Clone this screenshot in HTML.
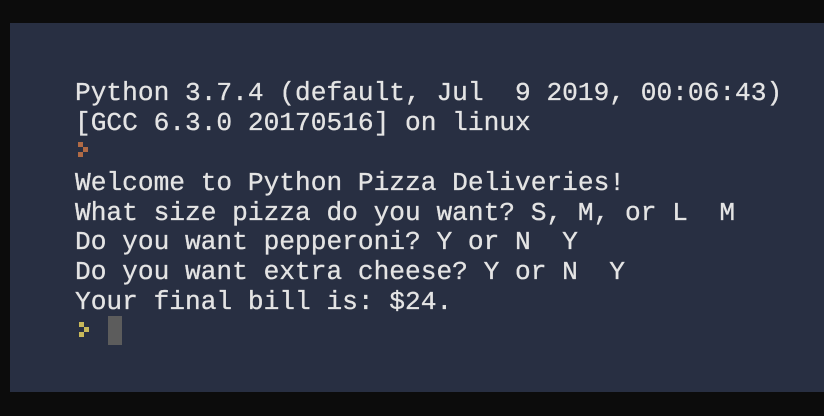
<!DOCTYPE html>
<html><head><style>
html,body{margin:0;padding:0;width:824px;height:416px;background:#0c0c0c;overflow:hidden}
#p{position:absolute;left:10px;top:23px;width:814px;height:369px;background:#282f42}
.l{position:absolute;left:75px;font-family:"Liberation Mono","Courier New",monospace;font-size:26.2px;color:#e4e4e4;white-space:pre;line-height:30px;-webkit-text-stroke:0.3px #e4e4e4}
.pr{position:absolute;width:12px;height:16px}
.pr i{position:absolute;width:5px;height:5px}
</style></head><body>
<div id="p"></div>
<div class="l" style="top:78px">Python 3.7.4 (default, Jul  9 2019, 00:06:43)</div>
<div class="l" style="top:108px">[GCC 6.3.0 20170516] on linux</div>
<div class="pr" style="left:78px;top:142px"><i style="left:0;top:0;background:#b06a45"></i><i style="left:5px;top:5px;background:#b06a45"></i><i style="left:0;top:10px;background:#b06a45"></i></div>
<div class="l" style="top:168px">Welcome to Python Pizza Deliveries!</div>
<div class="l" style="top:198px">What size pizza do you want? S, M, or L  M</div>
<div class="l" style="top:227px">Do you want pepperoni? Y or N  Y</div>
<div class="l" style="top:257px">Do you want extra cheese? Y or N  Y</div>
<div class="l" style="top:287px">Your final bill is: $24.</div>
<div class="pr" style="left:79px;top:322px"><i style="left:0;top:0;background:#c8b85a"></i><i style="left:5px;top:5px;background:#c8b85a"></i><i style="left:0;top:10px;background:#c8b85a"></i></div>
<div style="position:absolute;left:108px;top:316px;width:14px;height:29px;background:#5c5c5c"></div>
</body></html>
